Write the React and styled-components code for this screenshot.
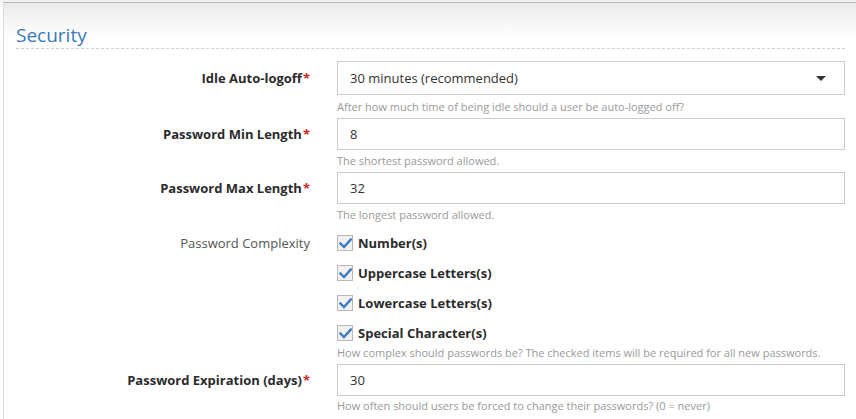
import styled, { createGlobalStyle } from "styled-components";

const GlobalStyle = createGlobalStyle`
  html, body {
    margin: 0;
    background: #fff;
    font-family: "Open Sans", "Liberation Sans", sans-serif;
    color: #333;
    overflow: hidden;
  }
`;

const Page = styled.div`
  border-top: 2px solid #f2f2f2;
`;

const Card = styled.div`
  box-sizing: border-box;
  margin-left: 3px;
  border-top: 1px solid #b9b1bd;
  border-left: 1px solid #dcdcdc;
  background: linear-gradient(#ebebeb, #fff 36px);
  padding: 19px 11px 0 12px;
  height: calc(100vh - 2px);
  overflow: hidden;
`;

const Title = styled.h2`
  margin: 0;
  font-size: 19px;
  font-weight: 400;
  line-height: 26px;
  color: #3b78b8;
  border-bottom: 1px dashed #cfcfcf;
`;

const Form = styled.div`
  margin-top: 12px;
`;

const Row = styled.div`
  display: grid;
  grid-template-columns: 294px 1fr;
  column-gap: 27px;
  margin-bottom: 4px;
`;

const Label = styled.div`
  text-align: right;
  font-size: 13px;
  font-weight: ${(p) => (p.$plain ? 400 : 700)};
  color: ${(p) => (p.$plain ? "#555" : "#2b2b2b")};
  line-height: ${(p) => p.$h}px;
  padding-top: ${(p) => p.$pt || 0}px;
`;

const Star = styled.span`
  color: #d41f1f;
  margin-left: 1px;
`;

const Control = styled.div`
  min-width: 0;
`;

const Input = styled.input`
  display: block;
  box-sizing: border-box;
  width: 100%;
  height: 32px;
  border: 1px solid #cccccc;
  padding: 0 12px;
  font-family: "Open Sans", "Liberation Sans", sans-serif;
  font-size: 13px;
  color: #333;
  background: #fff;
  outline: none;
`;

const Select = styled.div`
  box-sizing: border-box;
  height: 34px;
  border: 1px solid #cccccc;
  background: #fff;
  padding: 0 18px 0 12px;
  display: flex;
  align-items: center;
  justify-content: space-between;
  font-size: 13px;
  color: #333;
`;

const Caret = styled.span`
  width: 0;
  height: 0;
  border-left: 5px solid transparent;
  border-right: 5px solid transparent;
  border-top: 5px solid #333;
`;

const Help = styled.div`
  margin-top: ${(p) => p.$mt ?? 4}px;
  font-size: 11px;
  line-height: 14px;
  color: #999;
`;

const CheckList = styled.div`
  display: flex;
  flex-direction: column;
  gap: 14px;
  padding-top: 9px;
`;

const CheckItem = styled.label`
  display: flex;
  align-items: center;
  height: 16px;
  gap: 5px;
  font-size: 13px;
  font-weight: 700;
  color: #2b2b2b;
`;

const Box = styled.span`
  box-sizing: border-box;
  width: 16px;
  height: 16px;
  border: 1px solid #bdb6b6;
  background: #f1f1f1;
  display: flex;
  align-items: center;
  justify-content: center;
`;

const Check = () => (
  <svg width="13" height="11" viewBox="0 0 13 11">
    <path d="M1.5 5.5 L5 9 L11.8 1.5" fill="none" stroke="#3a7cc4" strokeWidth="2.4" strokeLinecap="square" />
  </svg>
);

const complexity = ["Number(s)", "Uppercase Letters(s)", "Lowercase Letters(s)", "Special Character(s)"];

const App = () => {
  return (
    <Page>
      <GlobalStyle />
      <Card>
        <Title>Security</Title>
        <Form>
          <Row>
            <Label $h={34}>
              Idle Auto-logoff<Star>*</Star>
            </Label>
            <Control>
              <Select>
                <span>30 minutes (recommended)</span>
                <Caret />
              </Select>
              <Help $mt={5}>After how much time of being idle should a user be auto-logged off?</Help>
            </Control>
          </Row>

          <Row>
            <Label $h={32}>
              Password Min Length<Star>*</Star>
            </Label>
            <Control>
              <Input defaultValue="8" />
              <Help>The shortest password allowed.</Help>
            </Control>
          </Row>

          <Row>
            <Label $h={32}>
              Password Max Length<Star>*</Star>
            </Label>
            <Control>
              <Input defaultValue="32" />
              <Help>The longest password allowed.</Help>
            </Control>
          </Row>

          <Row>
            <Label $plain $h={16} $pt={9}>
              Password Complexity
            </Label>
            <Control>
              <CheckList>
                {complexity.map((c) => (
                  <CheckItem key={c}>
                    <Box>
                      <Check />
                    </Box>
                    {c}
                  </CheckItem>
                ))}
              </CheckList>
              <Help $mt={5}>
                How complex should passwords be? The checked items will be required for all new passwords.
              </Help>
            </Control>
          </Row>

          <Row>
            <Label $h={32}>
              Password Expiration (days)<Star>*</Star>
            </Label>
            <Control>
              <Input defaultValue="30" />
              <Help $mt={3}>How often should users be forced to change their passwords? (0 = never)</Help>
            </Control>
          </Row>
        </Form>
      </Card>
    </Page>
  );
};

export default App;
